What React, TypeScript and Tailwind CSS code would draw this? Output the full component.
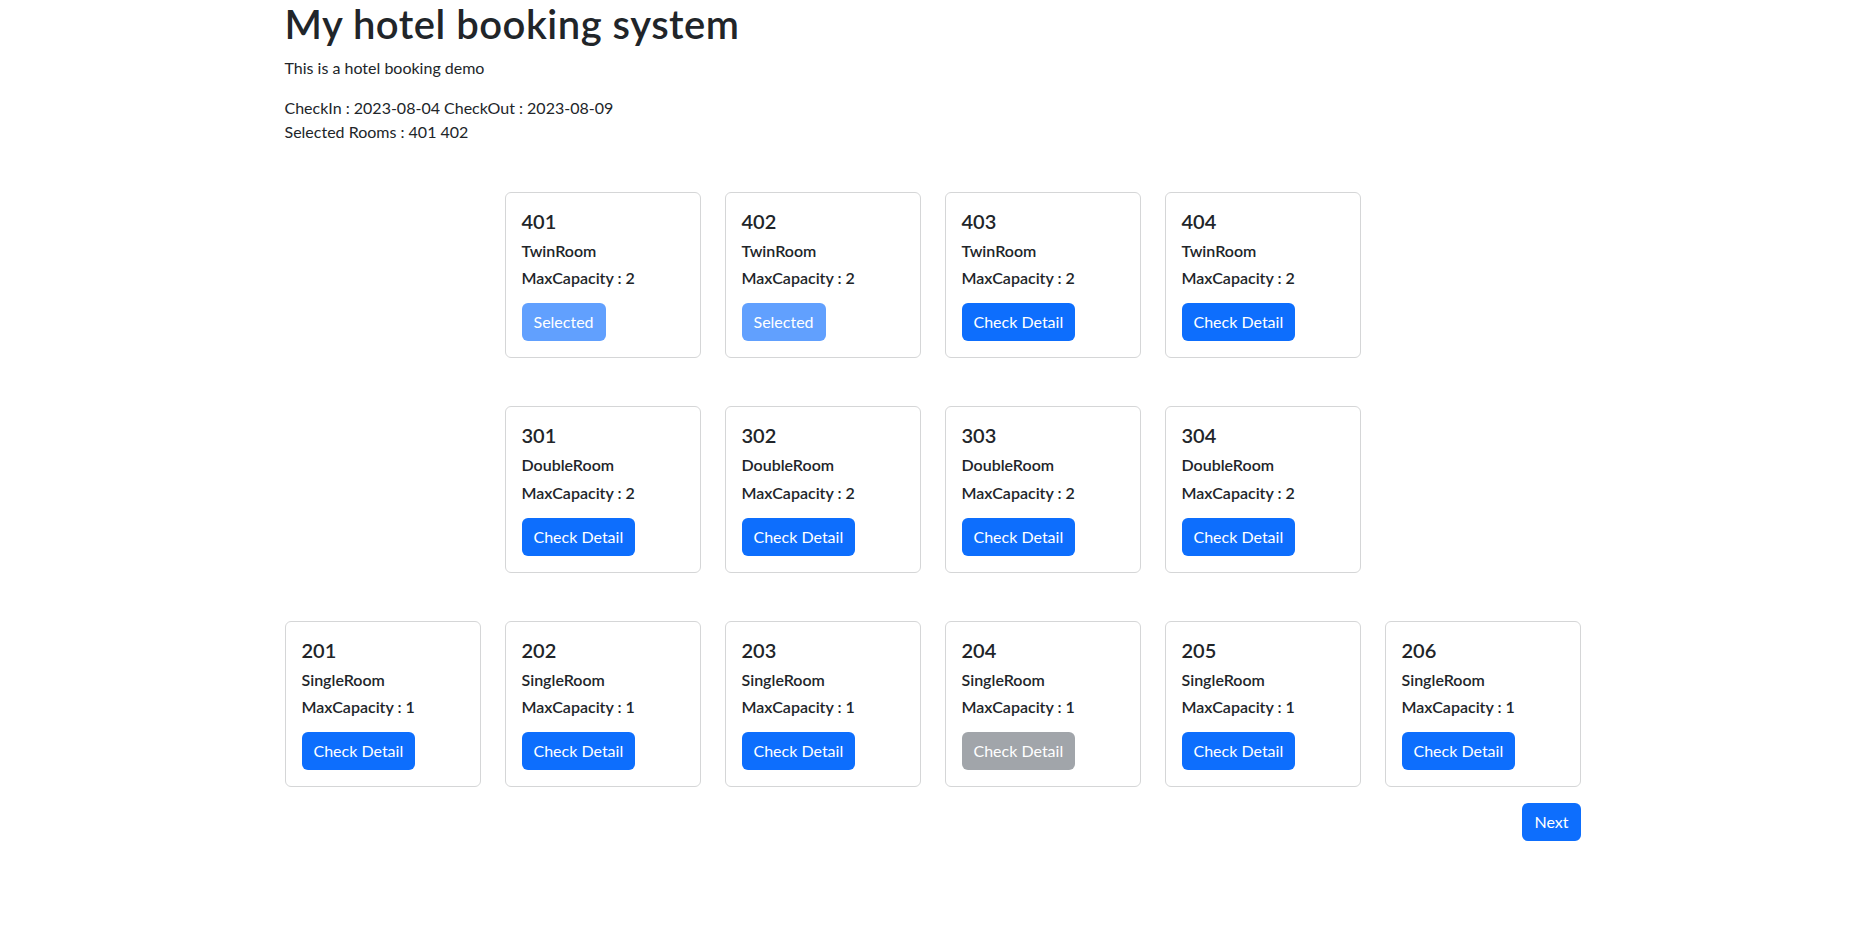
import React from "react";

type Room = {
  no: string;
  type: string;
  cap: number;
  state?: "selected" | "disabled";
};

const rows: Room[][] = [
  [
    { no: "401", type: "TwinRoom", cap: 2, state: "selected" },
    { no: "402", type: "TwinRoom", cap: 2, state: "selected" },
    { no: "403", type: "TwinRoom", cap: 2 },
    { no: "404", type: "TwinRoom", cap: 2 },
  ],
  [
    { no: "301", type: "DoubleRoom", cap: 2 },
    { no: "302", type: "DoubleRoom", cap: 2 },
    { no: "303", type: "DoubleRoom", cap: 2 },
    { no: "304", type: "DoubleRoom", cap: 2 },
  ],
  [
    { no: "201", type: "SingleRoom", cap: 1 },
    { no: "202", type: "SingleRoom", cap: 1 },
    { no: "203", type: "SingleRoom", cap: 1 },
    { no: "204", type: "SingleRoom", cap: 1, state: "disabled" },
    { no: "205", type: "SingleRoom", cap: 1 },
    { no: "206", type: "SingleRoom", cap: 1 },
  ],
];

function RoomCard({ room }: { room: Room }) {
  let btn = "bg-[#0d6efd] text-white";
  let label = "Check Detail";
  if (room.state === "selected") {
    btn = "bg-[#61a0fe] text-white";
    label = "Selected";
  } else if (room.state === "disabled") {
    btn = "bg-[#a1a5aa] text-white";
  }

  return (
    <div className="w-[220px] px-3">
      <div className="rounded-md border border-[#d5d6d7] bg-white p-4">
        <h5 className="mb-2 text-[20px] leading-[24px] font-semibold">{room.no}</h5>
        <h6 className="mb-2 text-[16px] leading-[19.2px] font-semibold">{room.type}</h6>
        <h6 className="mb-4 text-[16px] leading-[19.2px] font-semibold">
          MaxCapacity : {room.cap}
        </h6>
        <button className={`h-[38px] rounded-md px-3 text-[16px] leading-6 ${btn}`}>
          {label}
        </button>
      </div>
    </div>
  );
}

export default function App() {
  return (
    <div className="min-h-screen bg-white text-[#212529] font-['Lato',sans-serif]">
      <div className="mx-auto w-[1320px] px-3">
        <h1 className="mb-2 text-[40px] leading-[48px] font-semibold tracking-[0.5px]">
          My hotel booking system
        </h1>
        <p className="mb-4 text-[16px] leading-6">This is a hotel booking demo</p>
        <div className="text-[16px] leading-6">CheckIn : 2023-08-04 CheckOut : 2023-08-09</div>
        <div className="text-[16px] leading-6">Selected Rooms : 401 402</div>

        {rows.map((row, i) => (
          <div key={i} className="mx-[-12px] mt-12 flex justify-center">
            {row.map((r) => (
              <RoomCard key={r.no} room={r} />
            ))}
          </div>
        ))}

        <div className="mt-4 flex justify-end">
          <button className="h-[38px] rounded-md bg-[#0d6efd] px-3 text-[16px] leading-6 text-white">
            Next
          </button>
        </div>
      </div>
    </div>
  );
}
